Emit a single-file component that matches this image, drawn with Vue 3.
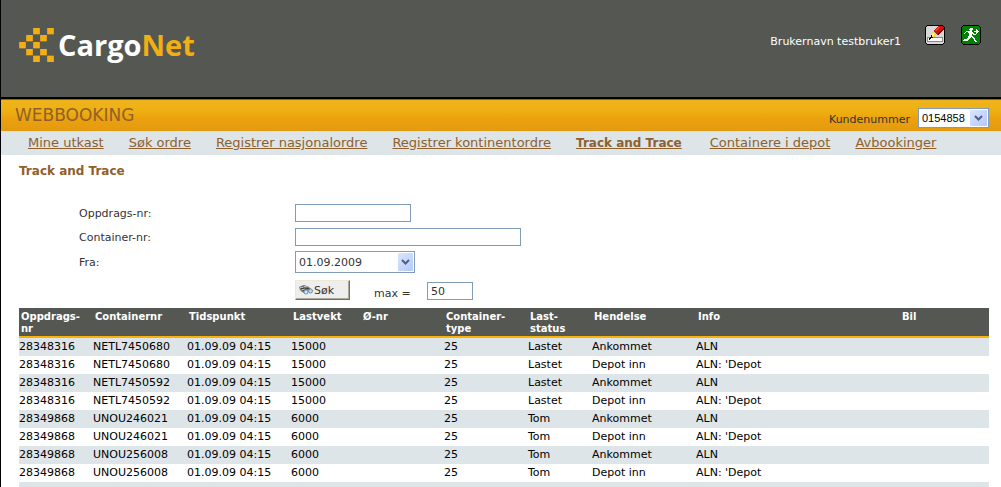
<script setup>
import { ref } from 'vue'

const navItems = [
  { label: 'Mine utkast' },
  { label: 'Søk ordre' },
  { label: 'Registrer nasjonalordre' },
  { label: 'Registrer kontinentordre' },
  { label: 'Track and Trace', active: true },
  { label: 'Containere i depot' },
  { label: 'Avbookinger' },
]

const columns = [
  { label: 'Oppdrags-nr', cls: 'c-order' },
  { label: 'Containernr', cls: 'c-container' },
  { label: 'Tidspunkt', cls: 'c-time' },
  { label: 'Lastvekt', cls: 'c-weight' },
  { label: 'Ø-nr', cls: 'c-onr' },
  { label: 'Container-type', cls: 'c-type' },
  { label: 'Last-status', cls: 'c-status' },
  { label: 'Hendelse', cls: 'c-event' },
  { label: 'Info', cls: 'c-info' },
  { label: 'Bil', cls: 'c-truck' },
]

const time = '01.09.09 04:15'
const rows = [
  ['28348316', 'NETL7450680', time, '15000', '', '25', 'Lastet', 'Ankommet', 'ALN', ''],
  ['28348316', 'NETL7450680', time, '15000', '', '25', 'Lastet', 'Depot inn', "ALN: 'Depot", ''],
  ['28348316', 'NETL7450592', time, '15000', '', '25', 'Lastet', 'Ankommet', 'ALN', ''],
  ['28348316', 'NETL7450592', time, '15000', '', '25', 'Lastet', 'Depot inn', "ALN: 'Depot", ''],
  ['28349868', 'UNOU246021', time, '6000', '', '25', 'Tom', 'Ankommet', 'ALN', ''],
  ['28349868', 'UNOU246021', time, '6000', '', '25', 'Tom', 'Depot inn', "ALN: 'Depot", ''],
  ['28349868', 'UNOU256008', time, '6000', '', '25', 'Tom', 'Ankommet', 'ALN', ''],
  ['28349868', 'UNOU256008', time, '6000', '', '25', 'Tom', 'Depot inn', "ALN: 'Depot", ''],
  ['', '', '', '', '', '', '', '', '', ''],
]

const orderNo = ref('')
const containerNo = ref('')
const max = ref('50')
</script>

<template>
  <div class="page">
    <header class="top">
      <div class="logo">
        <svg class="mark" viewBox="0 0 104 102" aria-hidden="true">
          <g fill="#f2af14">
            <rect x="42" y="0" width="20" height="19" />
            <rect x="84" y="0" width="20" height="19" />
            <rect x="21" y="21" width="20" height="19" />
            <rect x="63" y="21" width="20" height="19" />
            <rect x="0" y="42" width="20" height="19" />
            <rect x="42" y="42" width="20" height="19" />
            <rect x="21" y="63" width="20" height="19" />
            <rect x="63" y="63" width="20" height="19" />
            <rect x="42" y="83" width="20" height="19" />
            <rect x="84" y="83" width="20" height="19" />
          </g>
        </svg>
        <span class="word">Cargo<span class="net">Net</span></span>
      </div>
      <div class="user">
        <span class="username">Brukernavn testbruker1</span>
        <button class="icon-btn" type="button" aria-label="Rediger">
          <svg viewBox="0 0 20 20" shape-rendering="crispEdges">
            <path fill="#000" d="M2 0h16v1h1v1h1v16h-1v1h-1v1H2v-1H1v-1H0V2h1V1h1z" />
            <path fill="#d8d8d8" d="M2 1h16v1h1v16h-1v1H2v-1H1V2h1z" />
            <path fill="#888" d="M2 12h16v5H2z" />
            <path fill="#fff" d="M3 13h14v3H3z" />
            <path fill="#f8d840" d="M7 7h2v1h1v1h1v1h1v1h-2v1H8v1H6v-3h1z" />
            <path fill="#fff3a0" d="M8 8h1v3H7v-2h1z" />
            <path fill="#000" d="M6 10h1v2h1v1H6v1H5v1H4v-2h1v-1h1z" />
            <path fill="#d01010" d="M13 1h5v1h1v3h-1v1h-1v1h-1v1h-1v1h-1v1h-2V9h-1V8h-1V7H9V5h1V4h1V3h1V2h1z" />
            <path fill="#f04038" d="M13 2h2v1h-1v1h-1v1h-1v1h-2V5h1V4h1V3h1z" />
            <path fill="#800000" d="M18 3h1v2h-1v1h-1v1h-1v1h-1v1h-1v1h-1V8h1V7h1V6h1V5h1V4h1z" />
          </svg>
        </button>
        <button class="icon-btn" type="button" aria-label="Logg ut">
          <svg viewBox="0 0 20 20" shape-rendering="crispEdges">
            <path fill="#000" d="M2 0h16v1h1v1h1v16h-1v1h-1v1H2v-1H1v-1H0V2h1V1h1z" />
            <path fill="#008000" d="M2 1h16v1h1v16h-1v1H2v-1H1V2h1z" />
            <path
              fill="#fff"
              d="M9 3h3v2h-1v1H9V5H8V4h1zM5 6h6v1h1v1h1v1h2v1h-3V9h-1v2h1v1h1v1h1v2h1v1h1v1h-2v-1h-1v-2h-1v-1h-1v-1h-1v1H9v1H8v1H7v1H2v-1h1v-1h3v-1h1v-2h1V8H7V7H5v1H4v1H3V8h1V7h1zM15 4h1v1h1v1h1v1h-1v1h-1v1h-1V7h-2V6h2z"
            />
          </svg>
        </button>
      </div>
    </header>

    <div class="banner">
      <span class="brand">WEBBOOKING</span>
      <div class="customer">
        <label for="customer">Kundenummer</label>
        <span class="select-box customer-select">
          <select id="customer">
            <option>0154858</option>
          </select>
          <span class="arrow">
            <svg viewBox="0 0 9 6"><path d="M1 1l3.500 3.500L8 1" fill="none" stroke="#4d6185" stroke-width="2" /></svg>
          </span>
        </span>
      </div>
    </div>

    <nav class="nav">
      <a v-for="item in navItems" :key="item.label" href="#" :class="{ active: item.active }">{{ item.label }}</a>
    </nav>

    <main>
      <h1>Track and Trace</h1>

      <form class="search" @submit.prevent>
        <div class="field">
          <label for="order">Oppdrags-nr:</label>
          <input id="order" v-model="orderNo" class="order" type="text" />
        </div>
        <div class="field">
          <label for="container">Container-nr:</label>
          <input id="container" v-model="containerNo" class="container" type="text" />
        </div>
        <div class="field date-field">
          <label for="from">Fra:</label>
          <span class="select-box date-select">
            <select id="from">
              <option>01.09.2009</option>
            </select>
            <span class="arrow">
              <svg viewBox="0 0 9 6"><path d="M1 1l3.500 3.500L8 1" fill="none" stroke="#4d6185" stroke-width="2" /></svg>
            </span>
          </span>
        </div>
        <div class="actions">
          <button class="submit" type="submit">
            <svg viewBox="0 0 14 10" aria-hidden="true">
              <path fill="#777" d="M0 2l2-1 3-1 3 1 2 1 2 2-2 1-3 1-2 2-2-1-2-2z" />
              <path fill="#bbb" d="M1 2h3v1H1zM5 1h3v1H5zM3 4h2v1H3z" />
              <path fill="#444" d="M2 3h3v1H2zM6 3h4v1H6zM4 5h2v1H4z" />
              <circle cx="7" cy="7" r="2" fill="#d4ecfb" stroke="#6f8ba6" />
              <circle cx="11.500" cy="6" r="2" fill="#b9dcf6" stroke="#6f8ba6" />
            </svg>
            <span>Søk</span>
          </button>
          <label for="max">max =</label>
          <input id="max" v-model="max" class="max" type="text" />
        </div>
      </form>

      <table>
        <colgroup>
          <col v-for="c in columns" :key="c.cls" :class="c.cls" />
        </colgroup>
        <thead>
          <tr>
            <th v-for="c in columns" :key="c.cls" scope="col">{{ c.label }}</th>
          </tr>
        </thead>
        <tbody>
          <tr v-for="(row, i) in rows" :key="i">
            <td v-for="(cell, j) in row" :key="j">{{ cell }}</td>
          </tr>
        </tbody>
      </table>
    </main>
  </div>
</template>

<style>
body {
  margin: 0;
  background: #fff;
}
</style>

<style scoped>
* {
  box-sizing: border-box;
}
.page {
  height: 100vh;
  overflow: hidden;
  border-left: 1px solid #000;
  font-family: Verdana, "DejaVu Sans", sans-serif;
  font-size: 11px;
  color: #000;
}
.top {
  display: flex;
  justify-content: space-between;
  align-items: flex-start;
  height: 99px;
  padding: 25px 20px 0 18px;
  background: #555753;
  border-bottom: 2px solid #000;
}
.logo {
  display: flex;
  align-items: center;
  gap: 4px;
  height: 40px;
}
.mark {
  width: 35px;
  height: 34px;
}
.word {
  font: bold 29px/40px "Open Sans", sans-serif;
  color: #fff;
}
.net {
  color: #f2af14;
}
.user {
  display: flex;
  align-items: flex-start;
  gap: 16px;
}
.username {
  padding: 9px 8px 0 0;
  line-height: 16px;
  color: #fff;
}
.icon-btn {
  width: 20px;
  height: 20px;
  padding: 0;
  border: 0;
  background: none;
}
.icon-btn svg {
  display: block;
  width: 20px;
  height: 20px;
}
.banner {
  display: flex;
  justify-content: space-between;
  height: 32px;
  padding: 0 12px 0 14px;
  border-top: 1px solid #86662a;
  background: linear-gradient(#efb51c, #eeae12 40%, #eba10e 60%, #e39a10);
}
.brand {
  font-size: 17px;
  line-height: 30px;
  color: #8f602b;
}
.customer {
  display: flex;
  align-items: flex-start;
  gap: 8px;
  padding-top: 8px;
  color: #333;
}
.customer label {
  padding-top: 4px;
  line-height: 16px;
}
.select-box {
  position: relative;
  display: block;
}
select,
input {
  display: block;
  margin: 0;
  border: 1px solid #7f9db9;
  border-radius: 0;
  background: #fff;
  color: #333;
  font-family: inherit;
  font-size: 11px;
  appearance: none;
}
select {
  width: 100%;
  height: 100%;
  padding: 0 20px 0 3px;
}
.arrow {
  position: absolute;
  top: 2px;
  right: 2px;
  bottom: 2px;
  width: 15px;
  display: flex;
  align-items: center;
  justify-content: center;
  border-radius: 1px;
  background: linear-gradient(135deg, #dbe6fe, #b4c9fa);
  pointer-events: none;
}
.arrow svg {
  width: 9px;
  height: 6px;
}
.customer-select {
  width: 71px;
  height: 20px;
}
.customer-select .arrow {
  width: 17px;
}
.customer-select select {
  font-family: "Liberation Sans", Arial, sans-serif;
  color: #000;
}
.nav {
  display: flex;
  gap: 25px;
  height: 24px;
  padding-left: 27px;
  background: #dee5e8;
  font-size: 13px;
  line-height: 24px;
  white-space: nowrap;
}
.nav a {
  color: #8f602b;
}
.nav .active {
  margin-right: 3px;
  font-size: 12px;
  font-weight: bold;
}
main {
  padding: 0 12px 0 18px;
}
h1 {
  margin: 0;
  padding-top: 8px;
  font-size: 12px;
  line-height: 16px;
  color: #8f602b;
}
.search {
  padding: 22px 0 8px 60px;
  color: #333;
}
.field {
  display: flex;
  align-items: center;
  height: 24px;
}
.date-field {
  height: 26px;
}
.field label {
  width: 216px;
}
.order {
  width: 116px;
  height: 18px;
}
.container {
  width: 226px;
  height: 18px;
}
.date-select {
  width: 120px;
  height: 22px;
}
.actions {
  display: flex;
  align-items: flex-end;
  height: 25px;
  padding-left: 216px;
}
.submit {
  display: flex;
  align-items: center;
  gap: 1px;
  width: 55px;
  height: 20px;
  padding: 0 3px;
  border: 1px solid;
  border-color: #ece9d8 #716f64 #716f64 #ece9d8;
  box-shadow: inset -1px -1px #aca899;
  background: #eee;
  color: #333;
  font-family: inherit;
  font-size: 11px;
}
.submit svg {
  width: 14px;
  height: 10px;
}
.actions label {
  margin-left: 24px;
  width: 53px;
}
.max {
  width: 46px;
  height: 18px;
  padding: 0 3px;
}
table {
  width: 100%;
  table-layout: fixed;
  border-collapse: separate;
  border-spacing: 0;
}
thead tr {
  background: #555753;
}
th {
  height: 30px;
  padding: 3px 2px 0;
  border-bottom: 2px solid #fbb208;
  vertical-align: top;
  text-align: left;
  font-size: 10px;
  line-height: 12px;
  color: #fff;
}
td {
  height: 18px;
  padding: 0;
  line-height: 18px;
  white-space: nowrap;
}
tbody tr:nth-child(odd) {
  background: #dee5e8;
}
.c-order { width: 74px; }
.c-container { width: 94px; }
.c-time { width: 104px; }
.c-weight { width: 70px; }
.c-onr { width: 83px; }
.c-type { width: 84px; }
.c-status { width: 64px; }
.c-event { width: 104px; }
.c-info { width: 204px; }
</style>
